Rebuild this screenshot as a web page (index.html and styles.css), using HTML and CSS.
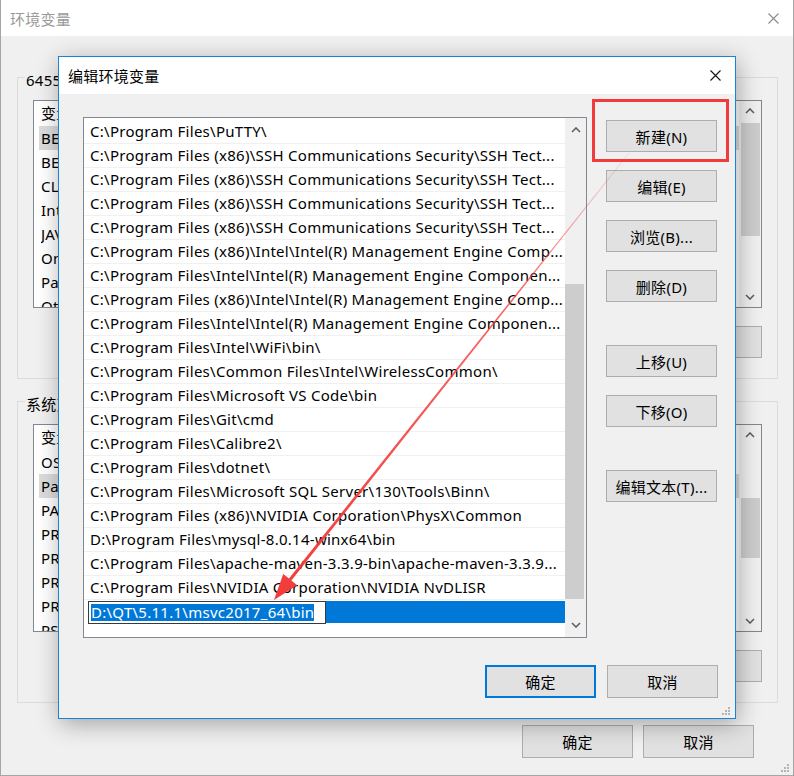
FILE: index.html
```html
<!DOCTYPE html>
<html lang="zh-CN">
<head>
<meta charset="utf-8">
<title>环境变量</title>
<link rel="stylesheet" href="styles.css">
</head>
<body>
<div class="window">
  <div class="win-title">
    <span class="win-title-text">环境变量</span>
    <svg class="win-close" width="11" height="11" viewBox="0 0 11 11"><path d="M0.5 0.5L10.5 10.5M10.5 0.5L0.5 10.5" stroke="#8a8a8a" stroke-width="1.1" fill="none"/></svg>
  </div>
  <div class="win-body">
    <div class="group">
      <div class="group-label">6455 的用户变量(U)</div>
      <div class="listbox">
        <div class="lv">
          <div class="lv-head"><span class="c1">变量</span><span class="c2">值</span></div>
          <div class="lv-row sel"><span class="c1">BEA_HOME</span><span class="c2">C:\bea</span></div>
          <div class="lv-row"><span class="c1">BEA_JAVA</span><span class="c2">C:\bea\jdk</span></div>
          <div class="lv-row"><span class="c1">CLASSPATH</span><span class="c2">.;%JAVA_HOME%\lib</span></div>
          <div class="lv-row"><span class="c1">IntelliJ IDEA</span><span class="c2">C:\Program Files\JetBrains\bin</span></div>
          <div class="lv-row"><span class="c1">JAVA_HOME</span><span class="c2">C:\Program Files\Java\jdk1.8.0</span></div>
          <div class="lv-row"><span class="c1">OneDrive</span><span class="c2">C:\Users\6455\OneDrive</span></div>
          <div class="lv-row"><span class="c1">Path</span><span class="c2">C:\Users\6455\AppData\Local</span></div>
          <div class="lv-row"><span class="c1">Other</span><span class="c2">C:\Other</span></div>
        </div>
        <div class="vscroll">
          <div class="sarrow"><svg width="10" height="6" viewBox="0 0 10 6"><path d="M1 5L5 1L9 5" stroke="#606060" stroke-width="1.6" fill="none"/></svg></div>
          <div class="strack"><div class="sthumb t1"></div></div>
          <div class="sarrow"><svg width="10" height="6" viewBox="0 0 10 6"><path d="M1 1L5 5L9 1" stroke="#606060" stroke-width="1.6" fill="none"/></svg></div>
        </div>
      </div>
      <div class="btn-row">
        <button class="btn">新建(N)...</button>
        <button class="btn">编辑(E)...</button>
        <button class="btn">删除(D)</button>
      </div>
    </div>

    <div class="group g2">
      <div class="group-label">系统变量(S)</div>
      <div class="listbox">
        <div class="lv">
          <div class="lv-head"><span class="c1">变量</span><span class="c2">值</span></div>
          <div class="lv-row"><span class="c1">OS</span><span class="c2">Windows_NT</span></div>
          <div class="lv-row sel"><span class="c1">Path</span><span class="c2">C:\Program Files\PuTTY\</span></div>
          <div class="lv-row"><span class="c1">PATHEXT</span><span class="c2">.COM;.EXE;.BAT;.CMD</span></div>
          <div class="lv-row"><span class="c1">PROCESSOR_ARCHITECTURE</span><span class="c2">AMD64</span></div>
          <div class="lv-row"><span class="c1">PROCESSOR_IDENTIFIER</span><span class="c2">Intel64 Family 6</span></div>
          <div class="lv-row"><span class="c1">PROCESSOR_LEVEL</span><span class="c2">6</span></div>
          <div class="lv-row"><span class="c1">PROCESSOR_REVISION</span><span class="c2">8e0a</span></div>
          <div class="lv-row"><span class="c1">PSModulePath</span><span class="c2">%ProgramFiles%\WindowsPowerShell</span></div>
        </div>
        <div class="vscroll">
          <div class="sarrow"><svg width="10" height="6" viewBox="0 0 10 6"><path d="M1 5L5 1L9 5" stroke="#606060" stroke-width="1.6" fill="none"/></svg></div>
          <div class="strack"><div class="sthumb t2"></div></div>
          <div class="sarrow"><svg width="10" height="6" viewBox="0 0 10 6"><path d="M1 1L5 5L9 1" stroke="#606060" stroke-width="1.6" fill="none"/></svg></div>
        </div>
      </div>
      <div class="btn-row">
        <button class="btn">新建(W)...</button>
        <button class="btn">编辑(I)...</button>
        <button class="btn">删除(L)</button>
      </div>
    </div>

    <div class="win-foot">
      <button class="btn btn-foot">确定</button>
      <button class="btn btn-foot">取消</button>
    </div>
  </div>
  <svg class="grip win-grip" width="10" height="10" viewBox="0 0 10 10"><g fill="#b4b4b4"><rect x="7" y="1" width="2" height="2"/><rect x="4" y="4" width="2" height="2"/><rect x="7" y="4" width="2" height="2"/><rect x="1" y="7" width="2" height="2"/><rect x="4" y="7" width="2" height="2"/><rect x="7" y="7" width="2" height="2"/></g></svg>

  <div class="dialog">
    <div class="dlg-title">
      <span>编辑环境变量</span>
      <svg class="dlg-close" width="11" height="11" viewBox="0 0 11 11"><path d="M0.5 0.5L10.5 10.5M10.5 0.5L0.5 10.5" stroke="#111" stroke-width="1.1" fill="none"/></svg>
    </div>
    <div class="dlg-body">
      <div class="dlg-main">
        <div class="pathlist">
          <div class="rows">
            <div class="row">C:\Program Files\PuTTY\</div>
            <div class="row">C:\Program Files (x86)\SSH Communications Security\SSH Tect...</div>
            <div class="row">C:\Program Files (x86)\SSH Communications Security\SSH Tect...</div>
            <div class="row">C:\Program Files (x86)\SSH Communications Security\SSH Tect...</div>
            <div class="row">C:\Program Files (x86)\SSH Communications Security\SSH Tect...</div>
            <div class="row">C:\Program Files (x86)\Intel\Intel(R) Management Engine Comp...</div>
            <div class="row">C:\Program Files\Intel\Intel(R) Management Engine Componen...</div>
            <div class="row">C:\Program Files (x86)\Intel\Intel(R) Management Engine Comp...</div>
            <div class="row">C:\Program Files\Intel\Intel(R) Management Engine Componen...</div>
            <div class="row">C:\Program Files\Intel\WiFi\bin\</div>
            <div class="row">C:\Program Files\Common Files\Intel\WirelessCommon\</div>
            <div class="row">C:\Program Files\Microsoft VS Code\bin</div>
            <div class="row">C:\Program Files\Git\cmd</div>
            <div class="row">C:\Program Files\Calibre2\</div>
            <div class="row">C:\Program Files\dotnet\</div>
            <div class="row">C:\Program Files\Microsoft SQL Server\130\Tools\Binn\</div>
            <div class="row">C:\Program Files (x86)\NVIDIA Corporation\PhysX\Common</div>
            <div class="row">D:\Program Files\mysql-8.0.14-winx64\bin</div>
            <div class="row">C:\Program Files\apache-maven-3.3.9-bin\apache-maven-3.3.9...</div>
            <div class="row">C:\Program Files\NVIDIA Corporation\NVIDIA NvDLISR</div>
            <div class="row row-edit">
              <div class="edit-sel">
                <div class="editbox"><span class="edit-text">D:\QT\5.11.1\msvc2017_64\bin</span></div>
              </div>
            </div>
          </div>
          <div class="dscroll">
            <div class="darrow"><svg width="10" height="6" viewBox="0 0 10 6"><path d="M1 5L5 1L9 5" stroke="#606060" stroke-width="1.6" fill="none"/></svg></div>
            <div class="strack"><div class="sthumb t3"></div></div>
            <div class="darrow"><svg width="10" height="6" viewBox="0 0 10 6"><path d="M1 1L5 5L9 1" stroke="#606060" stroke-width="1.6" fill="none"/></svg></div>
          </div>
        </div>
        <div class="side-btns">
          <button class="btn">新建(N)</button>
          <button class="btn">编辑(E)</button>
          <button class="btn">浏览(B)...</button>
          <button class="btn">删除(D)</button>
          <button class="btn gap-lg">上移(U)</button>
          <button class="btn">下移(O)</button>
          <button class="btn gap-lg">编辑文本(T)...</button>
        </div>
      </div>
      <div class="dlg-foot">
        <button class="btn btn-foot btn-primary">确定</button>
        <button class="btn btn-foot">取消</button>
      </div>
    </div>
    <svg class="grip dlg-grip" width="10" height="10" viewBox="0 0 10 10"><g fill="#b4b4b4"><rect x="7" y="1" width="2" height="2"/><rect x="4" y="4" width="2" height="2"/><rect x="7" y="4" width="2" height="2"/><rect x="1" y="7" width="2" height="2"/><rect x="4" y="7" width="2" height="2"/><rect x="7" y="7" width="2" height="2"/></g></svg>
  </div>

  <svg class="annot" width="794" height="776" viewBox="0 0 794 776">
    <defs>
      <linearGradient id="fade" gradientUnits="userSpaceOnUse" x1="628" y1="153" x2="273" y2="600">
        <stop offset="0" stop-color="#f23b3b" stop-opacity="0.1"/>
        <stop offset="0.3" stop-color="#f23b3b" stop-opacity="0.75"/>
        <stop offset="1" stop-color="#f23b3b" stop-opacity="1"/>
      </linearGradient>
    </defs>
    <rect x="592.5" y="100.5" width="134" height="60" fill="none" stroke="#f33a3a" stroke-width="3"/>
    <polygon points="627.7,152.8 288.0,578.6 282.2,574.0 273,600 296.2,585.2 290.4,580.6 628.3,153.2" fill="url(#fade)"/>
  </svg>
</div>
</body>
</html>
```

FILE: styles.css
```css
html, body {
  margin: 0;
  padding: 0;
}

body {
  width: 794px;
  height: 776px;
  overflow: hidden;
  font-family: "Noto Sans", "Noto Sans CJK SC", sans-serif;
  font-size: 15px;
  letter-spacing: 0.27px;
  color: #000;
  background: #f0f0f0;
}

.window {
  position: relative;
  width: 794px;
  height: 776px;
  box-sizing: border-box;
  border: 1px solid #a6a6a6;
  border-top: none;
  background: #f0f0f0;
  overflow: hidden;
}

.win-title {
  height: 36px;
  background: #fff;
  display: flex;
  align-items: center;
  justify-content: space-between;
  padding: 0 14px 0 9px;
  color: #9a9a9a;
}

.win-body {
  padding: 41px 15px 0 16px;
  display: flex;
  flex-direction: column;
}

.group {
  border: 1px solid #dcdcdc;
  padding: 0 15px 20px;
  display: flex;
  flex-direction: column;
}

.group.g2 {
  margin-top: 22px;
}

.group-label {
  align-self: flex-start;
  margin: -8px 0 0 -8px;
  padding: 0 1px;
  height: 20px;
  line-height: 20px;
  background: #f0f0f0;
}

.listbox {
  margin-top: 10px;
  height: 208px;
  box-sizing: border-box;
  border: 1px solid #828790;
  background: #fff;
  display: flex;
  overflow: hidden;
}

.lv {
  flex: 1;
  min-width: 0;
  overflow: hidden;
}

.lv-head {
  height: 25px;
  line-height: 25px;
  display: flex;
  padding-left: 7px;
  white-space: nowrap;
}

.lv-row {
  height: 24px;
  line-height: 24px;
  display: flex;
  margin-left: 5px;
  padding-left: 2px;
  white-space: nowrap;
}

.lv-row.sel {
  background: #dcdcdc;
}

.c1 {
  width: 200px;
  flex: none;
  overflow: hidden;
}

.c2 {
  flex: 1;
  overflow: hidden;
}

.vscroll {
  width: 22px;
  flex: none;
  background: #f0f0f0;
  display: flex;
  flex-direction: column;
}

.sarrow {
  height: 20px;
  flex: none;
  display: flex;
  align-items: center;
  justify-content: center;
}

.strack {
  flex: 1;
  display: flex;
  flex-direction: column;
}

.sthumb {
  background: #cdcdcd;
}

.vscroll .sthumb {
  margin: 0 1px 0 2px;
}

.sthumb.t1 {
  margin-top: 2px;
  height: 113px;
}

.sthumb.t2 {
  margin-top: 53px;
  height: 60px;
}

.btn-row {
  margin-top: 18px;
  display: flex;
  justify-content: flex-end;
  gap: 10px;
}

.btn {
  width: 111px;
  height: 32px;
  box-sizing: border-box;
  border: 1px solid #adadad;
  background: #e1e1e1;
  font: inherit;
  letter-spacing: 0.27px;
  color: #000;
  padding: 0;
  margin: 0;
  flex: none;
}

.win-foot {
  margin-top: 22px;
  display: flex;
  justify-content: flex-end;
  gap: 10px;
  padding-right: 24px;
}

.btn-foot {
  height: 33px;
}

.grip {
  position: absolute;
}

.win-grip {
  right: 3px;
  bottom: 2px;
}

/* Dialog */
.dialog {
  position: absolute;
  left: 57px;
  top: 56px;
  width: 678px;
  height: 663px;
  box-sizing: border-box;
  border: 1px solid #1883d7;
  background: #f0f0f0;
  box-shadow: 2px 5px 22px rgba(0, 0, 0, 0.32);
  display: flex;
  flex-direction: column;
}

.dlg-title {
  height: 36px;
  flex: none;
  background: #fff;
  display: flex;
  align-items: center;
  justify-content: space-between;
  padding: 0 14px 1px 9px;
}

.dlg-body {
  padding: 23px 17px 0 24px;
  display: flex;
  flex-direction: column;
}

.dlg-main {
  display: flex;
  gap: 19px;
}

.pathlist {
  width: 504px;
  height: 521px;
  box-sizing: border-box;
  border: 1px solid #828790;
  background: #fff;
  display: flex;
  flex: none;
}

.rows {
  flex: 1;
  min-width: 0;
  padding-top: 2px;
}

.row {
  height: 24px;
  box-sizing: border-box;
  border-bottom: 1px solid #f0f0f0;
  padding-left: 6px;
  line-height: 23px;
  white-space: nowrap;
  overflow: hidden;
}

.row-edit {
  padding-left: 4px;
  border-bottom: none;
  padding-top: 1px;
}

.edit-sel {
  height: 22px;
  background: #0078d7;
  display: flex;
}

.editbox {
  height: 23px;
  box-sizing: border-box;
  border: 1px solid #3a3a3a;
  background: #fff;
  padding: 1px 11px 0 2px;
  display: flex;
  align-items: flex-start;
}

.edit-text {
  background: #0078d7;
  color: #fff;
  line-height: 17px;
  height: 17px;
  margin-top: 1px;
}

.dscroll {
  width: 21px;
  flex: none;
  background: #f0f0f0;
  display: flex;
  flex-direction: column;
}

.darrow {
  height: 24px;
  flex: none;
  display: flex;
  align-items: center;
  justify-content: center;
}

.dscroll .sthumb {
  margin: 0 2px 0 0;
}

.sthumb.t3 {
  margin-top: 142px;
  height: 315px;
}

.side-btns {
  display: flex;
  flex-direction: column;
  padding-top: 3px;
}

.side-btns .btn + .btn {
  margin-top: 18px;
}

.side-btns .btn.gap-lg {
  margin-top: 43px;
}

.dlg-foot {
  margin-top: 27px;
  display: flex;
  justify-content: flex-end;
  gap: 11px;
}

.btn-primary {
  border: 2px solid #0078d7;
}

.dlg-grip {
  right: 4px;
  bottom: 2px;
}

.annot {
  position: absolute;
  left: 0;
  top: 0;
  pointer-events: none;
}
```
